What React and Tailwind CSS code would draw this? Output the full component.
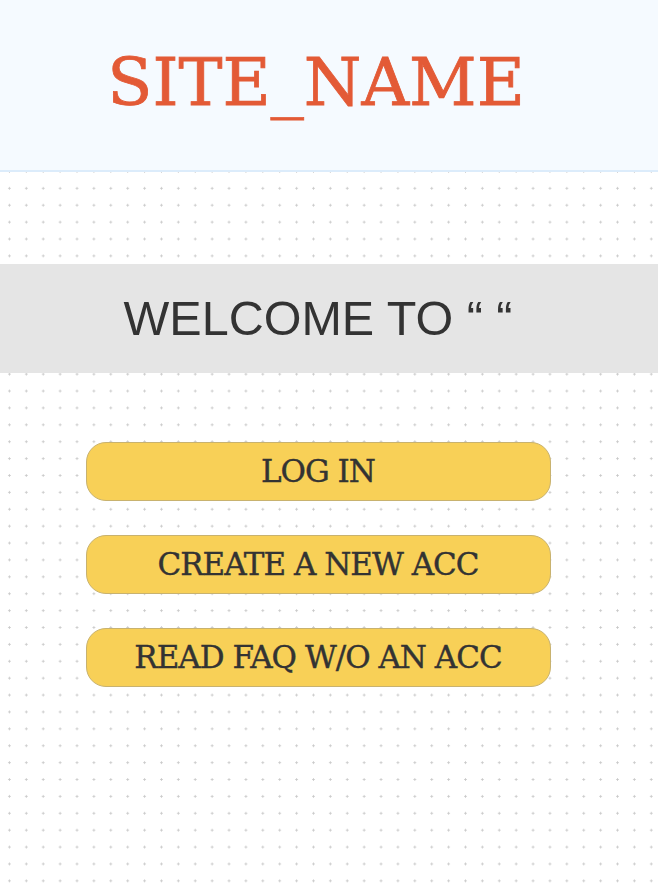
import React from 'react';

const buttons = ['LOG IN', 'CREATE A NEW ACC', 'READ FAQ W/O AN ACC'];

const App = () => {
    return (
        <div className="w-[658px] h-[892px] flex flex-col bg-white overflow-hidden">
            {/* Header */}
            <header className="h-[172px] shrink-0 bg-[#f5faff] border-b-2 border-[#dcecfb] flex items-center">
                <div className="w-[632px] flex justify-center pb-[4px]">
                    <h1 className="font-['DejaVu_Serif',serif] text-[66px] leading-none text-[#e35a36] [-webkit-text-stroke:0.8px_#e35a36]">
                        SITE_NAME
                    </h1>
                </div>
            </header>

            {/* Dotted canvas */}
            <main className="flex-1 flex flex-col pt-[92px] bg-[radial-gradient(circle,#c9c9c9_0.9px,transparent_1.4px)] bg-[size:16.9px_16.9px] bg-[position:1px_-9px]">
                <div className="h-[109px] bg-[#e5e5e5] flex items-center">
                    <div className="w-[636px] flex justify-center">
                        <h2 className="font-['Liberation_Sans',Arial,sans-serif] text-[48.5px] leading-none text-[#333333]">
                            WELCOME TO “ “
                        </h2>
                    </div>
                </div>

                <div className="w-[636px] flex flex-col items-center gap-[34px] pt-[69px]">
                    {buttons.map((label) => (
                        <button
                            key={label}
                            className="w-[465px] h-[59px] rounded-[20px] bg-[#f8d057] border border-[#c8b26f] flex items-center justify-center font-['DejaVu_Serif',serif] text-[31px] tracking-[-1px] leading-none text-[#333333] [-webkit-text-stroke:0.4px_#333333]"
                        >
                            {label}
                        </button>
                    ))}
                </div>
            </main>
        </div>
    );
};

export default App;
